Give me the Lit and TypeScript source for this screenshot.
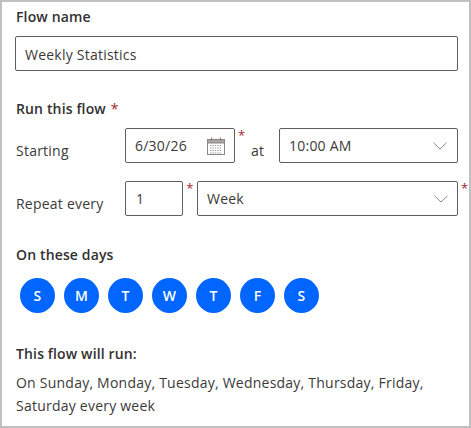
import { LitElement, html, css } from "lit";
import { customElement } from "lit/decorators.js";

const chevron = html`<svg class="chev" width="14" height="8" viewBox="0 0 14 8"><path d="M0.5 0.8 L7 7 L13.5 0.8" fill="none" stroke="#8a8886" stroke-width="1"/></svg>`;
const calendar = html`<svg class="cal" width="18" height="18" viewBox="0 0 18 18">
  <rect x="0.5" y="2.5" width="17" height="15" fill="#fff" stroke="#8a8886"/>
  <rect x="0.5" y="2.5" width="17" height="3.5" fill="#a6a6a6" stroke="#8a8886"/>
  <path d="M4.5 0.5v3M13.5 0.5v3" stroke="#7a7a7a" stroke-width="1"/>
  <path d="M3 8.5h12M3 11h12M3 13.5h12M3 16h12" stroke="#9a9a9a" stroke-width="1" stroke-dasharray="1.4 1"/>
</svg>`;

@customElement("app-root")
export class AppRoot extends LitElement {
  static styles = css`
    :host {
      display: block;
      box-sizing: border-box;
      width: 471px;
      height: 428px;
      overflow: hidden;
      background: #fff;
      border: 2px solid #c0c0c0;
      padding: 5px 0 0 13px;
      font-family: "Open Sans", "Noto Sans", sans-serif;
      font-size: 14px;
      letter-spacing: 0.23px;
      color: #3b3a39;
    }
    .label {
      font-weight: 600;
      line-height: 20px;
      color: #323130;
      padding-left: 1px;
      letter-spacing: 0.14px;
    }
    .box {
      box-sizing: border-box;
      height: 35px;
      border: 1px solid #605e5c;
      border-radius: 2px;
      display: flex;
      align-items: center;
      justify-content: space-between;
      background: #fff;
    }
    .name {
      width: 443px;
      margin-top: 9px;
      padding: 2px 9px 0;
    }
    .req { color: #a4262c; font-weight: 400; margin-left: 1px; }
    .run-label { margin-top: 28px; }
    .row {
      display: flex;
      align-items: flex-start;
    }
    .row > * { flex: none; }
    .row1 { margin-top: 9px; }
    .row2 { margin-top: 18px; }
    .cap {
      box-sizing: border-box;
      width: 110px;
      padding: 13px 0 0 1px;
      line-height: 20px;
    }
    .star {
      color: #a4262c;
      line-height: 14px;
      font-size: 13px;
    }
    .date { width: 110px; padding: 0 9px 0 9px; }
    .at {
      width: 30px;
      padding: 13px 0 0 2px;
      box-sizing: border-box;
      line-height: 20px;
    }
    .after-date { width: 11px; margin-left: 3px; }
    .time { width: 179px; padding: 0 10px 0 9px; }
    .num { width: 58px; padding: 0 10px; }
    .after-num { width: 14px; text-align: center; }
    .sel { width: 261px; padding: 0 9px; }
    .last-star { margin-left: 3px; }
    .days-label { margin-top: 29px; }
    .days {
      display: flex;
      gap: 9px;
      margin: 13px 0 0 5px;
    }
    .day {
      width: 35px;
      height: 35px;
      border-radius: 50%;
      background: #0066ff;
      color: #fff;
      font-weight: 600;
      font-size: 14px;
      display: flex;
      align-items: center;
      justify-content: center;
    }
    .will { margin-top: 31px; }
    .desc {
      margin-top: 8px;
      padding-left: 1px;
      line-height: 22.5px;
      width: 432px;
    }
    .chev { display: block; }
    .cal { display: block; }
  `;

  render() {
    const days = ["S", "M", "T", "W", "T", "F", "S"];
    return html`
      <div class="label">Flow name</div>
      <div class="box name">Weekly Statistics</div>
      <div class="label run-label">Run this flow <span class="req">*</span></div>
      <div class="row row1">
        <div class="cap">Starting</div>
        <div class="box date"><span>6/30/26</span>${calendar}</div>
        <div class="star after-date">*</div>
        <div class="at">at</div>
        <div class="box time"><span>10:00 AM</span>${chevron}</div>
      </div>
      <div class="row row2">
        <div class="cap">Repeat every</div>
        <div class="box num">1</div>
        <div class="star after-num">*</div>
        <div class="box sel"><span>Week</span>${chevron}</div>
        <div class="star last-star">*</div>
      </div>
      <div class="label days-label">On these days</div>
      <div class="days">${days.map((d) => html`<div class="day">${d}</div>`)}</div>
      <div class="label will">This flow will run:</div>
      <div class="desc">On Sunday, Monday, Tuesday, Wednesday, Thursday, Friday, Saturday every week</div>
    `;
  }
}
